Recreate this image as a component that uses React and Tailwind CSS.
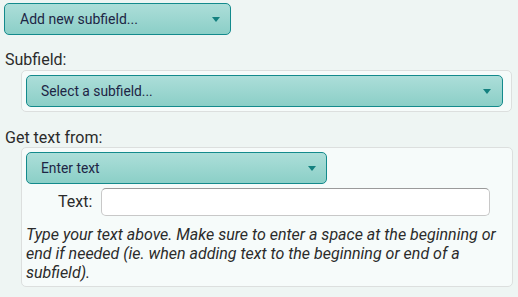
import React from 'react';

const Caret = () => (
    <svg width="8" height="5" viewBox="0 0 8 5" className="shrink-0">
        <path d="M0 0 H8 L4 5 Z" fill="#14807f" />
    </svg>
);

const Dropdown = ({ label, className, textClass }) => (
    <div className={"flex items-center justify-between rounded-[5px] border border-[#138a8c] bg-gradient-to-b from-[#acded9] to-[#8bcfc7] text-[#1d2545] " + className}>
        <span className={textClass}>{label}</span>
        <Caret />
    </div>
);

const App = () => {
    return (
        <div className="min-h-screen bg-[#eef5f3] pt-[3px] font-['Roboto',sans-serif] text-[#2b2b2b]">
            <Dropdown
                label="Add new subfield..."
                className="ml-[4px] w-[227px] h-[32px] pl-[15px] pr-[10px]"
                textClass="text-[14px]"
            />

            <div className="mt-[15px] pl-[5px] h-[20px] leading-[20px] text-[16px]">Subfield:</div>
            <div className="ml-[21px] mr-[6px] rounded-[5px] border border-[#dcdfde] bg-[#f6fbfa] pt-[4px] pb-[4px] pl-[4px] pr-[8px]">
                <Dropdown
                    label="Select a subfield..."
                    className="h-[32px] pl-[14px] pr-[11px]"
                    textClass="text-[13.8px]"
                />
            </div>

            <div className="mt-[16px] pl-[5px] h-[19px] leading-[19px] text-[16px]">Get text from:</div>
            <div className="ml-[21px] mr-[5px] rounded-[5px] border border-[#dcdfde] bg-[#f6fbfa] pt-[4px] pb-[4px] pl-[4px] pr-[8px]">
                <Dropdown
                    label="Enter text"
                    className="w-[301px] h-[32px] pl-[14px] pr-[10px]"
                    textClass="text-[13.8px]"
                />
                <div className="mt-[4px] flex items-center pl-[32px]">
                    <label className="w-[43px] text-[16px]">Text:</label>
                    <input
                        type="text"
                        className="w-[389px] h-[28px] rounded-[5px] border border-[#c8c8c8] border-t-[#9a9a9a] bg-white px-2 text-[14px] outline-none"
                    />
                </div>
                <p className="mt-[9px] text-[16px] leading-[19px] italic text-[#2b2b2b]">
                    Type your text above. Make sure to enter a space at the beginning or end if needed (ie. when adding text to the beginning or end of a subfield).
                </p>
            </div>
        </div>
    );
};

export default App;
